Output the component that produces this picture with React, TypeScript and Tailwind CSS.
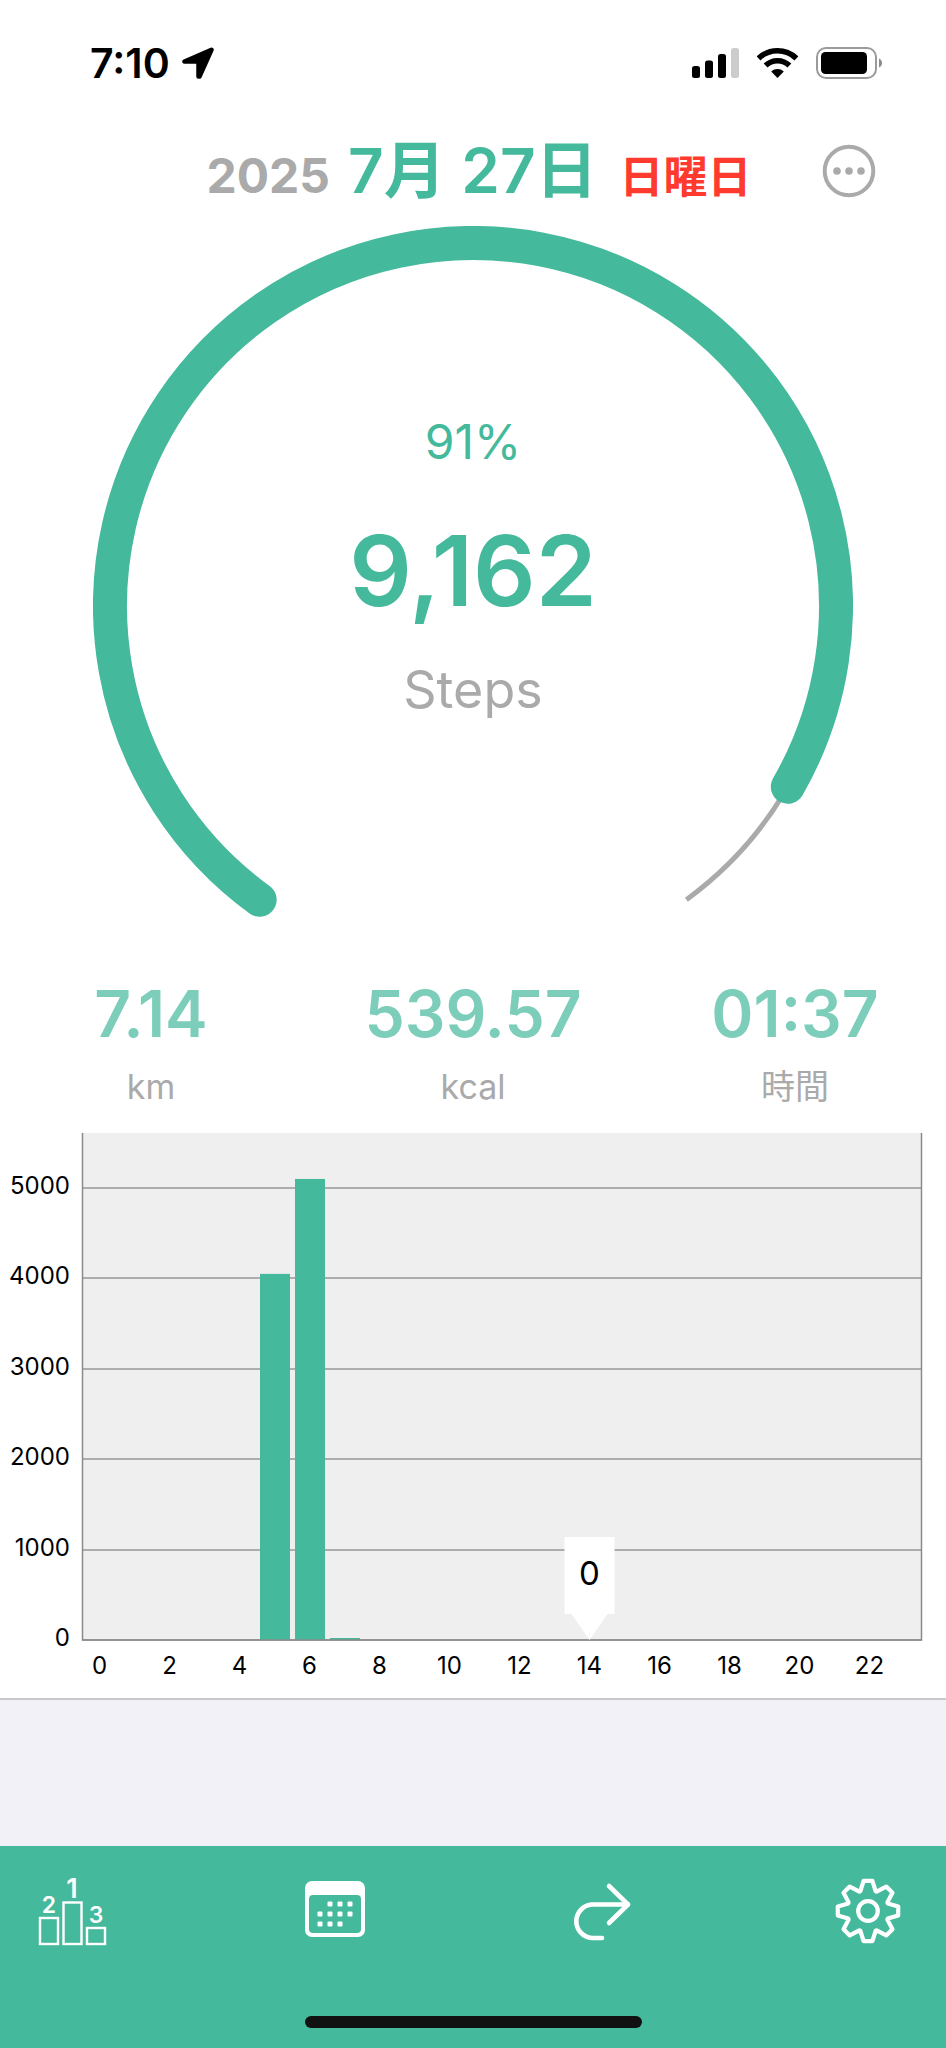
import React from 'react';

const GOAL = 10000;
const STEPS = 9162;

const RING_RADIUS = 363;
const RING_CENTER = 380;
const RING_START = 126;
const RING_SWEEP = 288;

const ringPoint = (deg: number) => {
  const rad = (deg * Math.PI) / 180;
  return `${RING_CENTER + RING_RADIUS * Math.cos(rad)} ${RING_CENTER + RING_RADIUS * Math.sin(rad)}`;
};

const ringArc = (from: number, to: number) =>
  `M${ringPoint(from)}A${RING_RADIUS} ${RING_RADIUS} 0 ${to - from > 180 ? 1 : 0} 1 ${ringPoint(to)}`;

const stats = [
  { value: '7.14', unit: 'km' },
  { value: '539.57', unit: 'kcal' },
  { value: '01:37', unit: '時間' },
];

// steps per hour of the day
const hourly = [0, 0, 0, 0, 0, 4050, 5100, 12, 0, 0, 0, 0, 0, 0, 0, 0, 0, 0, 0, 0, 0, 0, 0, 0];
const selectedHour = 14;

const PLOT = { left: 82, right: 922, top: 0, bottom: 507, slot: 35, barWidth: 30, perStep: 0.0904 };

const gearPath = () => {
  const tooth = [
    [-7.6, -19.8],
    [-4.4, -30.2],
    [4.4, -30.2],
    [7.6, -19.8],
  ];
  const points: string[] = [];
  for (let i = 0; i < 8; i++) {
    const a = (i * Math.PI) / 4;
    tooth.forEach(([x, y]) => {
      points.push(`${34 + x * Math.cos(a) - y * Math.sin(a)} ${34 + x * Math.sin(a) + y * Math.cos(a)}`);
    });
  }
  return `M${points.join('L')}Z`;
};

const StatusBar: React.FC = () => (
  <div className="flex h-[126px] items-center justify-between pl-[90px] pr-16 text-black">
    <div className="flex items-center gap-3">
      <span className="text-[41px] leading-none font-semibold">7:10</span>
      <svg width="32" height="32" viewBox="0 0 32 32" aria-hidden="true">
        <path
          d="M29.5 2.8L2.5 14.5H16.5V29.5H17.5Z"
          fill="currentColor"
          stroke="currentColor"
          strokeWidth="4.5"
          strokeLinejoin="round"
        />
      </svg>
    </div>
    <div className="flex items-center gap-[18px]">
      <svg width="47" height="32" viewBox="0 0 47 32" aria-hidden="true">
        <rect x="0" y="19" width="8" height="12" rx="2.5" />
        <rect x="13" y="13.5" width="8" height="17.5" rx="2.5" />
        <rect x="26" y="7" width="8" height="24" rx="2.5" />
        <rect x="39" y="1" width="8" height="30" rx="2.5" fill="#cccccc" />
      </svg>
      <svg width="41" height="32" viewBox="0 0 41 32" aria-hidden="true">
        <g fill="none" stroke="currentColor" strokeWidth="5.6">
          <path d="M1.6 11.4A27.2 27.2 0 0 1 39.4 11.4" />
          <path d="M8.6 18.6A17.2 17.2 0 0 1 32.4 18.6" />
        </g>
        <path d="M20.5 31L14.2 24.4A9.5 9.5 0 0 1 26.8 24.4Z" />
      </svg>
      <svg width="66" height="32" viewBox="0 0 66 32" aria-hidden="true">
        <rect x="1" y="1" width="59" height="30" rx="9" fill="none" stroke="#9a9a9a" strokeWidth="2" />
        <rect x="5" y="5" width="46" height="22" rx="4.5" />
        <path d="M63 11.5Q66 13 66 16Q66 19 63 20.5Z" fill="#8a8a8a" />
      </svg>
    </div>
  </div>
);

const DateHeader: React.FC = () => (
  <header className="relative flex h-[90px] items-center justify-center pl-3">
    <h1 className="flex items-baseline leading-none font-bold whitespace-nowrap">
      <span className="mr-[18px] text-[48px] text-[#aaaaaa]">2025</span>
      <span className="mr-[22px] text-[62px] font-semibold text-[#44b99c]">7月 27日</span>
      <span className="text-[44px] text-[#ff3b30]">日曜日</span>
    </h1>
    <button type="button" aria-label="メニュー" className="absolute right-[70px]">
      <svg width="54" height="54" viewBox="0 0 54 54" fill="#aaaaaa">
        <circle cx="27" cy="27" r="24.3" fill="none" stroke="#aaaaaa" strokeWidth="4" />
        <circle cx="15" cy="27" r="3.8" />
        <circle cx="27" cy="27" r="3.8" />
        <circle cx="39" cy="27" r="3.8" />
      </svg>
    </button>
  </header>
);

const ProgressRing: React.FC = () => (
  <section className="relative mx-auto mt-[10px] w-full max-w-[760px]">
    <svg className="block w-full" viewBox="0 0 760 692" fill="none" aria-hidden="true">
      <path d={ringArc(RING_START, RING_START + RING_SWEEP)} stroke="#aaaaaa" strokeWidth="5" />
      <path
        d={ringArc(RING_START, RING_START + (RING_SWEEP * STEPS) / GOAL)}
        stroke="#44b99c"
        strokeWidth="34"
        strokeLinecap="round"
      />
    </svg>
    <div className="absolute inset-0 flex flex-col items-center pt-48 leading-none">
      <p className="text-[48px] text-[#44b99c]">{Math.floor((STEPS / GOAL) * 100)}%</p>
      <p className="mt-14 text-[98px] font-semibold text-[#44b99c]">{STEPS.toLocaleString('en-US')}</p>
      <p className="mt-11 text-[52px] text-[#aaaaaa]">Steps</p>
    </div>
  </section>
);

const HourlyChart: React.FC = () => {
  const { left, right, top, bottom, slot, barWidth, perStep } = PLOT;
  const markerX = left + slot * (selectedHour + 0.5);

  return (
    <svg className="mt-7 block w-full" viewBox="0 0 946 565" role="img" aria-label="Hourly steps">
      <rect x={left} y={top} width={right - left} height={bottom - top} fill="#efefef" />
      {[0, 1000, 2000, 3000, 4000, 5000].map((n) => {
        const y = Math.round(bottom - n * perStep);
        return (
          <g key={n}>
            <line x1={left} x2={right} y1={y} y2={y} stroke="#979797" strokeWidth="1.5" />
            <text x="70" y={y + 6} textAnchor="end" fontSize="24">
              {n}
            </text>
          </g>
        );
      })}
      {hourly.map((n, hour) => {
        const height = Math.max(n * perStep, 2);
        return n > 0 ? (
          <rect
            key={hour}
            x={left + slot * hour + 3}
            y={bottom - height}
            width={barWidth}
            height={height}
            fill="#44b99c"
          />
        ) : null;
      })}
      <path d={`M${left + 0.5} ${top}V${bottom}H${right - 0.5}V${top}`} fill="none" stroke="#8a8a8a" strokeWidth="1.5" />
      {hourly.map((_, hour) =>
        hour % 2 === 0 ? (
          <text key={hour} x={left + slot * (hour + 0.5)} y="541" textAnchor="middle" fontSize="24">
            {hour}
          </text>
        ) : null
      )}
      {/* Selected hour marker */}
      <path
        d={`M${markerX - 25} 404h50v77h-7L${markerX} ${bottom}L${markerX - 18} 481h-7Z`}
        fill="#ffffff"
      />
      <text x={markerX} y="452" textAnchor="middle" fontSize="33">
        {hourly[selectedHour]}
      </text>
    </svg>
  );
};

const Toolbar: React.FC = () => (
  <footer className="flex h-[202px] flex-col justify-between bg-[#44b99c] pt-[30px] pb-5">
    <nav className="flex justify-between pl-[38px] pr-11 text-white">
      <button type="button" aria-label="ランキング">
        <svg className="overflow-visible" width="68" height="70" viewBox="0 0 68 70" fill="currentColor">
          <g fill="none" stroke="currentColor" strokeWidth="2.4">
            <rect x="2" y="42" width="18" height="26" />
            <rect x="25.5" y="26.5" width="18" height="41.5" />
            <rect x="49" y="52" width="18" height="16" />
          </g>
          <g textAnchor="middle" fontWeight="600">
            <text x="34" y="22" fontSize="27">1</text>
            <text x="11" y="36.5" fontSize="23">2</text>
            <text x="58" y="46.5" fontSize="23">3</text>
          </g>
        </svg>
      </button>
      <button type="button" aria-label="カレンダー">
        <svg width="68" height="70" viewBox="0 0 68 70" fill="currentColor">
          <path
            fillRule="evenodd"
            d="M9 5H55A7 7 0 0 1 62 12V54A7 7 0 0 1 55 61H9A7 7 0 0 1 2 54V12A7 7 0 0 1 9 5ZM10 19A4 4 0 0 0 6 23V53A4 4 0 0 0 10 57H54A4 4 0 0 0 58 53V23A4 4 0 0 0 54 19Z"
          />
          {[
            [27, 28], [37, 28], [47, 28],
            [17, 38], [27, 38], [37, 38], [47, 38],
            [17, 48], [27, 48], [37, 48],
          ].map(([x, y]) => (
            <rect key={`${x}-${y}`} x={x - 2.5} y={y - 2.5} width="5" height="5" rx="1" />
          ))}
        </svg>
      </button>
      <button type="button" aria-label="共有">
        <svg
          width="68"
          height="70"
          viewBox="0 0 68 70"
          fill="none"
          stroke="currentColor"
          strokeWidth="4.6"
          strokeLinecap="round"
          strokeLinejoin="round"
        >
          <path d="M40 10L59 28.5L40 47" />
          <path d="M59 28.5H23A17 16.8 0 0 0 23 62H33" />
        </svg>
      </button>
      <button type="button" aria-label="設定">
        <svg
          width="68"
          height="68"
          viewBox="0 0 68 68"
          fill="none"
          stroke="currentColor"
          strokeWidth="4.2"
          strokeLinejoin="round"
        >
          <path d={gearPath()} />
          <circle cx="34" cy="34" r="9.8" />
        </svg>
      </button>
    </nav>
    <div className="mx-auto h-3 w-[337px] rounded-full bg-[#111111]" />
  </footer>
);

const App: React.FC = () => {
  return (
    <div
      lang="ja"
      className="flex min-h-screen flex-col bg-white font-['Inter','Noto_Sans_CJK_JP',sans-serif] text-black"
    >
      <StatusBar />
      <DateHeader />
      <main>
        <ProgressRing />
        <section className="mt-16 flex justify-between px-[41px] text-center leading-none">
          {stats.map((stat) => (
            <div key={stat.unit} className="w-[220px]">
              <p className="text-[64px] font-semibold whitespace-nowrap text-[#7cceba]">{stat.value}</p>
              <p className="mt-[23px] text-[34px] leading-9 text-[#aaaaaa]">{stat.unit}</p>
            </div>
          ))}
        </section>
        <HourlyChart />
      </main>
      <div className="min-h-[146px] flex-1 border-t-2 border-[#c8c8cc] bg-[#f2f1f8]" />
      <Toolbar />
    </div>
  );
};

export default App;
